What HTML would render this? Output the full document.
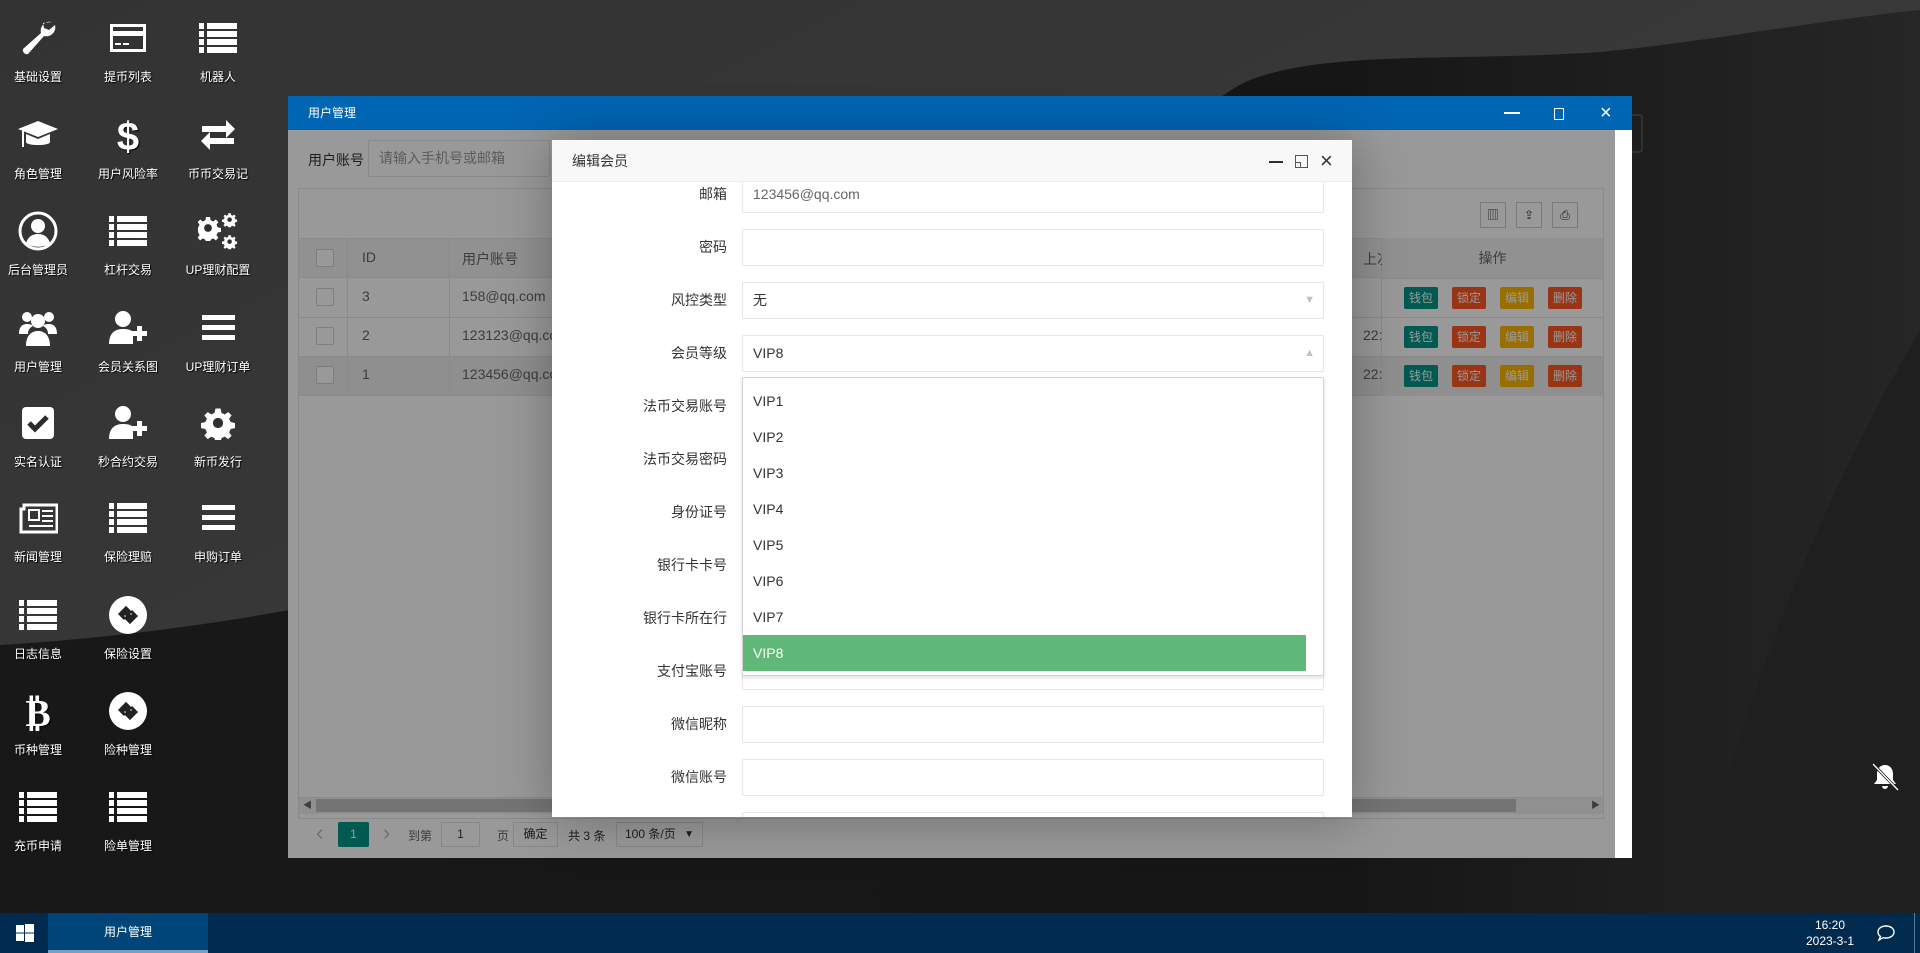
<!DOCTYPE html>
<html><head><meta charset="utf-8">
<style>
*{box-sizing:border-box;margin:0;padding:0}
body{width:1920px;height:953px;overflow:hidden;position:relative;background:#2e2e2e;font-family:"Liberation Sans","Noto Sans CJK SC",sans-serif;font-size:14px;color:#333}
.abs{position:absolute}
.ic{position:absolute;width:90px;text-align:center;color:#fff;font-size:12px;text-shadow:1px 1px 1px #000}
.ic svg{display:block;margin:0 auto 10px;width:40px;height:40px;fill:#fff}
.win{left:288px;top:96px;width:1344px;height:762px;background:#fff}
.tbar{left:0;top:0;width:1344px;height:34px;background:#0065b3;color:#fff;font-size:12px;line-height:34px;padding-left:20px}
.cb{display:inline-block;width:18px;height:18px;border:1px solid #d2d2d2;background:#fff;border-radius:2px}
.tc{position:absolute;font-size:14px;color:#666}
.btn{position:absolute;width:34px;height:22px;line-height:22px;text-align:center;color:#fff;font-size:12px;border-radius:2px}
.lbl{position:absolute;right:0;width:160px;text-align:right;font-size:14px;color:#333}
.inp{position:absolute;left:190px;width:582px;height:37px;border:1px solid #e6e6e6;border-radius:2px;background:#fff;font-size:14px;color:#666;line-height:35px;padding-left:10px}
.opt{height:36px;line-height:36px;padding-left:10px;font-size:14px;color:#333}
</style></head><body>
<svg width="0" height="0" style="position:absolute">
<defs>
<symbol id="list" viewBox="0 0 40 40"><rect x="1" y="5" width="5" height="6"/><rect x="9" y="5" width="30" height="6"/><rect x="1" y="13" width="5" height="6"/><rect x="9" y="13" width="30" height="6"/><rect x="1" y="21" width="5" height="6"/><rect x="9" y="21" width="30" height="6"/><rect x="1" y="29" width="5" height="6"/><rect x="9" y="29" width="30" height="6"/></symbol>
<symbol id="bars" viewBox="0 0 40 40"><rect x="4" y="7" width="33" height="5"/><rect x="4" y="17" width="33" height="5"/><rect x="4" y="27" width="33" height="5"/></symbol>
<symbol id="userplus" viewBox="0 0 40 40"><circle cx="15" cy="11" r="8"/><path d="M1 36c0-10 5-15 14-15 5 0 8 1 10 3v12z"/><rect x="24" y="23" width="15" height="5"/><rect x="29" y="18" width="5" height="15"/></symbol>
<symbol id="circ" viewBox="0 0 40 40"><circle cx="20" cy="20" r="19"/><path d="M11 20l7-7 4 4-3 3 3 3 4-4-3-3M29 20l-7 7-4-4 3-3-3-3-4 4 3 3" fill="none" stroke="#222" stroke-width="3"/></symbol>
<symbol id="gear" viewBox="0 0 40 40"><path d="M17 3h6l1 5 4 2 4-3 4 4-3 4 2 4 5 1v6l-5 1-2 4 3 4-4 4-4-3-4 2-1 5h-6l-1-5-4-2-4 3-4-4 3-4-2-4-5-1v-6l5-1 2-4-3-4 4-4 4 3 4-2z"/><circle cx="20" cy="20" r="6" fill="#2f2f2f"/></symbol>
</defs></svg>

<!-- desktop background -->
<svg class="abs" style="left:0;top:0" width="1920" height="953">
<defs>
<linearGradient id="g1" x1="0" y1="0" x2="1" y2="1"><stop offset="0" stop-color="#333"/><stop offset="1" stop-color="#3d3d3d"/></linearGradient>
<linearGradient id="g2" x1="0" y1="0" x2="1" y2="0"><stop offset="0" stop-color="#181818"/><stop offset=".7" stop-color="#161616"/><stop offset="1" stop-color="#262626"/></linearGradient>
</defs>
<rect width="1920" height="953" fill="url(#g1)"/>
<path d="M0 645C250 630 700 560 1000 320C1120 220 1180 110 1250 80C1330 50 1450 62 1600 52C1720 40 1820 20 1920 10L1920 953L0 953Z" fill="url(#g2)"/>
<path d="M1680 953C1740 700 1820 500 1920 330L1920 953Z" fill="#1f1f1f"/>
<rect x="1630" y="115" width="12" height="37" rx="2" fill="none" stroke="#444"/>
</svg>

<!-- desktop icons -->
<div class="ic" style="left:-7px;top:18px"><svg viewBox="0 0 40 40"><path d="M34 4a9 9 0 0 0-11 11L5 31a4 4 0 0 0 5 5l16-18a9 9 0 0 0 11-11l-6 5-5-2-1-5z"/></svg>基础设置</div>
<div class="ic" style="left:83px;top:18px"><svg viewBox="0 0 40 40"><path d="M2 6h36v28H2z M5 9v4h30V9z M5 18v13h30V18z" fill-rule="evenodd"/><rect x="7" y="25" width="6" height="2"/><rect x="15" y="25" width="6" height="2"/></svg>提币列表</div>
<div class="ic" style="left:173px;top:18px"><svg><use href="#list"/></svg>机器人</div>

<div class="ic" style="left:-7px;top:115px"><svg viewBox="0 0 40 40"><path d="M20 6L0 14l20 8 20-8z M8 19v8c0 4 24 4 24 0v-8l-12 5z M4 16v16h2V16z"/></svg>角色管理</div>
<div class="ic" style="left:83px;top:115px"><svg viewBox="0 0 40 40"><text x="20" y="35" text-anchor="middle" font-size="40" font-weight="bold" font-family="Liberation Sans" fill="#fff">$</text></svg>用户风险率</div>
<div class="ic" style="left:173px;top:115px"><svg viewBox="0 0 40 40"><path d="M4 11h24V5l9 9-9 9v-6H4z M36 23H12v-6l-9 9 9 9v-6h24z"/></svg>币币交易记</div>

<div class="ic" style="left:-7px;top:211px"><svg viewBox="0 0 40 40"><circle cx="20" cy="20" r="18" fill="none" stroke="#fff" stroke-width="3"/><circle cx="20" cy="15" r="7"/><path d="M8 32c2-6 6-9 12-9s10 3 12 9c-6 5-18 5-24 0z"/></svg>后台管理员</div>
<div class="ic" style="left:83px;top:211px"><svg><use href="#list"/></svg>杠杆交易</div>
<div class="ic" style="left:173px;top:211px"><svg viewBox="0 0 40 40"><g transform="translate(-3 4) scale(.65)"><use href="#gear"/></g><g transform="translate(24 1) scale(.38)"><use href="#gear"/></g><g transform="translate(24 23) scale(.38)"><use href="#gear"/></g></svg>UP理财配置</div>

<div class="ic" style="left:-7px;top:308px"><svg viewBox="0 0 40 40"><circle cx="9" cy="9" r="5"/><circle cx="31" cy="9" r="5"/><circle cx="20" cy="13" r="7"/><path d="M1 26c0-8 4-10 8-10s5 1 6 2c-4 2-5 5-5 8z M39 26c0-8-4-10-8-10s-5 1-6 2c4 2 5 5 5 8z M8 38c0-10 5-15 12-15s12 5 12 15z"/></svg>用户管理</div>
<div class="ic" style="left:83px;top:308px"><svg><use href="#userplus"/></svg>会员关系图</div>
<div class="ic" style="left:173px;top:308px"><svg><use href="#bars"/></svg>UP理财订单</div>

<div class="ic" style="left:-7px;top:403px"><svg viewBox="0 0 40 40"><rect x="4" y="4" width="32" height="32" rx="4"/><path d="M11 20l6 6 12-12" fill="none" stroke="#2c2c2c" stroke-width="5"/></svg>实名认证</div>
<div class="ic" style="left:83px;top:403px"><svg><use href="#userplus"/></svg>秒合约交易</div>
<div class="ic" style="left:173px;top:403px"><svg viewBox="0 0 40 40"><g transform="translate(3 3) scale(.85)"><use href="#gear"/></g></svg>新币发行</div>

<div class="ic" style="left:-7px;top:498px"><svg viewBox="0 0 40 40"><path d="M6 7h33v27H3V11h3z" fill="none" stroke="#fff" stroke-width="3"/><rect x="11" y="12" width="10" height="10" fill="none" stroke="#fff" stroke-width="2"/><rect x="24" y="12" width="11" height="2"/><rect x="24" y="17" width="11" height="2"/><rect x="24" y="22" width="11" height="2"/><rect x="11" y="27" width="24" height="2"/></svg>新闻管理</div>
<div class="ic" style="left:83px;top:498px"><svg><use href="#list"/></svg>保险理赔</div>
<div class="ic" style="left:173px;top:498px"><svg><use href="#bars"/></svg>申购订单</div>

<div class="ic" style="left:-7px;top:595px"><svg><use href="#list"/></svg>日志信息</div>
<div class="ic" style="left:83px;top:595px"><svg><use href="#circ"/></svg>保险设置</div>

<div class="ic" style="left:-7px;top:691px"><svg viewBox="0 0 40 40"><text x="20" y="35" text-anchor="middle" font-size="38" font-weight="bold" font-family="DejaVu Sans" fill="#fff">₿</text></svg>币种管理</div>
<div class="ic" style="left:83px;top:691px"><svg><use href="#circ"/></svg>险种管理</div>

<div class="ic" style="left:-7px;top:787px"><svg><use href="#list"/></svg>充币申请</div>
<div class="ic" style="left:83px;top:787px"><svg><use href="#list"/></svg>险单管理</div>

<!-- window -->
<div class="abs win">
 <div class="abs tbar">用户管理
  <div class="abs" style="left:1216px;top:16px;width:16px;height:2px;background:#fff"></div>
  <div class="abs" style="left:1266px;top:12px;width:10px;height:12px;border:1px solid #fff"></div>
  <div class="abs" style="left:1312px;top:0;font-size:20px;line-height:34px">×</div>
 </div>
 <!-- content -->
 <div class="abs" style="left:0;top:34px;width:1327px;height:728px;background:#fff;overflow:hidden">
  <div class="abs" style="left:20px;top:20px;font-size:14px;color:#333">用户账号</div>
  <div class="abs" style="left:80px;top:10px;width:182px;height:37px;border:1px solid #e6e6e6;border-radius:2px;color:#999;padding-left:10px;line-height:35px;font-size:14px">请输入手机号或邮箱</div>
  <div class="abs" style="left:10px;top:58px;width:1306px;height:631px;border:1px solid #e6e6e6">
   <div class="abs" style="left:1181px;top:13px;width:26px;height:26px;border:1px solid #ccc;font-size:12px;text-align:center;line-height:24px;color:#333">▥</div>
   <div class="abs" style="left:1217px;top:13px;width:26px;height:26px;border:1px solid #ccc;font-size:12px;text-align:center;line-height:24px;color:#333">⇪</div>
   <div class="abs" style="left:1253px;top:13px;width:26px;height:26px;border:1px solid #ccc;font-size:12px;text-align:center;line-height:24px;color:#333">⎙</div>
   <div class="abs" style="left:0;top:49px;width:1304px;height:40px;background:#f2f2f2;border-top:1px solid #e6e6e6;border-bottom:1px solid #e6e6e6"></div>
   <div class="abs" style="left:0;top:167px;width:1304px;height:39px;background:#eee"></div>
   <div class="abs" style="left:0;top:128px;width:1304px;height:1px;background:#e6e6e6"></div>
   <div class="abs" style="left:0;top:167px;width:1304px;height:1px;background:#e6e6e6"></div>
   <div class="abs" style="left:0;top:206px;width:1304px;height:1px;background:#e6e6e6"></div>
   <div class="abs" style="left:48px;top:49px;width:1px;height:158px;background:#e6e6e6"></div>
   <div class="abs" style="left:150px;top:49px;width:1px;height:158px;background:#e6e6e6"></div>
   <div class="abs" style="left:1082px;top:49px;width:1px;height:158px;background:#e6e6e6"></div>
   <div class="abs" style="left:17px;top:60px"><span class="cb"></span></div>
   <div class="abs" style="left:17px;top:99px"><span class="cb"></span></div>
   <div class="abs" style="left:17px;top:138px"><span class="cb"></span></div>
   <div class="abs" style="left:17px;top:177px"><span class="cb"></span></div>
   <div class="tc" style="left:63px;top:60px">ID</div>
   <div class="tc" style="left:163px;top:60px">用户账号</div>
   <div class="tc" style="left:1064px;top:60px">上次</div>
   <div class="tc" style="left:63px;top:99px">3</div><div class="tc" style="left:163px;top:99px">158@qq.com</div>
   <div class="tc" style="left:63px;top:138px">2</div><div class="tc" style="left:163px;top:138px">123123@qq.com</div><div class="tc" style="left:1064px;top:138px">22:</div>
   <div class="tc" style="left:63px;top:177px">1</div><div class="tc" style="left:163px;top:177px">123456@qq.com</div><div class="tc" style="left:1064px;top:177px">22:</div>
   <div class="abs" style="left:1083px;top:49px;width:221px;height:158px;background:#fff">
    <div class="abs" style="left:0;top:0;width:221px;height:40px;background:#f2f2f2;text-align:center;line-height:40px;color:#666">操作</div>
    <div class="abs" style="left:0;top:40px;width:221px;height:1px;background:#e6e6e6"></div>
    <div class="abs" style="left:0;top:118px;width:221px;height:40px;background:#eee"></div>
    <div class="abs" style="left:0;top:79px;width:221px;height:1px;background:#e6e6e6"></div>
    <div class="abs" style="left:0;top:118px;width:221px;height:1px;background:#e6e6e6"></div>
    <div class="btn" style="left:22px;top:49px;background:#009688">钱包</div><div class="btn" style="left:70px;top:49px;background:#ff5722">锁定</div><div class="btn" style="left:118px;top:49px;background:#ffb800">编辑</div><div class="btn" style="left:166px;top:49px;background:#ff5722">删除</div>
    <div class="btn" style="left:22px;top:88px;background:#009688">钱包</div><div class="btn" style="left:70px;top:88px;background:#ff5722">锁定</div><div class="btn" style="left:118px;top:88px;background:#ffb800">编辑</div><div class="btn" style="left:166px;top:88px;background:#ff5722">删除</div>
    <div class="btn" style="left:22px;top:127px;background:#009688">钱包</div><div class="btn" style="left:70px;top:127px;background:#ff5722">锁定</div><div class="btn" style="left:118px;top:127px;background:#ffb800">编辑</div><div class="btn" style="left:166px;top:127px;background:#ff5722">删除</div>
   </div>
   <!-- scrollbar -->
   <div class="abs" style="left:0;top:608px;width:1304px;height:17px;background:#f0f0f0;border-top:1px solid #e6e6e6"></div>
   <div class="abs" style="left:17px;top:610px;width:1200px;height:13px;background:#c1c1c1"></div>
   <div class="abs" style="left:4px;top:608px;font-size:9px;color:#666;line-height:17px">◀</div>
   <div class="abs" style="left:1292px;top:608px;font-size:9px;color:#666;line-height:17px">▶</div>
  </div>
  <!-- pagination -->
  <div class="abs" style="left:0;top:680px;width:1327px;height:50px;font-size:12px;color:#333">
   <div class="abs" style="left:28px;top:10px;color:#bbb;font-size:22px;line-height:25px">‹</div>
   <div class="abs" style="left:50px;top:12px;width:31px;height:25px;background:#009688;color:#fff;text-align:center;line-height:25px;border-radius:2px">1</div>
   <div class="abs" style="left:95px;top:10px;color:#bbb;font-size:22px;line-height:25px">›</div>
   <div class="abs" style="left:120px;top:17px;color:#666">到第</div>
   <div class="abs" style="left:153px;top:12px;width:39px;height:25px;border:1px solid #e2e2e2;text-align:center;line-height:23px">1</div>
   <div class="abs" style="left:209px;top:17px;color:#666">页</div>
   <div class="abs" style="left:225px;top:12px;width:45px;height:25px;border:1px solid #e2e2e2;text-align:center;line-height:23px">确定</div>
   <div class="abs" style="left:280px;top:17px">共 3 条</div>
   <div class="abs" style="left:328px;top:12px;width:87px;height:25px;border:1px solid #e2e2e2;line-height:23px;padding-left:8px">100 条/页<span style="position:absolute;right:8px;font-size:10px">▼</span></div>
  </div>
  <!-- shade -->
  <div class="abs" style="left:0;top:0;width:1327px;height:728px;background:rgba(0,0,0,0.4)"></div>
 </div>
</div>

<!-- modal -->
<div class="abs" style="left:552px;top:140px;width:800px;height:677px;background:#fff;box-shadow:1px 1px 50px rgba(0,0,0,.3);overflow:hidden">
 <div class="abs" style="left:0;top:0;width:800px;height:42px;background:#f8f8f8;border-bottom:1px solid #eee;z-index:3;font-size:14px;line-height:42px;padding-left:20px;color:#333">编辑会员
  <div class="abs" style="left:717px;top:21px;width:14px;height:2px;background:#2e2d3c"></div>
  <div class="abs" style="left:743px;top:15px;width:13px;height:13px;border:1px solid #555"></div>
  <div class="abs" style="left:743px;top:22px;width:6px;height:6px;border:1px solid #555"></div>
  <div class="abs" style="left:768px;top:0;font-size:22px;color:#333">×</div>
 </div>
 <div class="abs" style="left:0;top:36px;width:800px;height:700px">
  <div class="lbl" style="left:15px;top:8px">邮箱</div><div class="inp" style="top:0">123456@qq.com</div>
  <div class="lbl" style="left:15px;top:61px">密码</div><div class="inp" style="top:53px"></div>
  <div class="lbl" style="left:15px;top:114px">风控类型</div><div class="inp" style="top:106px;color:#333">无<span style="position:absolute;right:8px;top:0;color:#c2c2c2;font-size:11px">▼</span></div>
  <div class="lbl" style="left:15px;top:167px">会员等级</div><div class="inp" style="top:159px;color:#333">VIP8<span style="position:absolute;right:8px;top:0;color:#c2c2c2;font-size:11px">▲</span></div>
  <div class="lbl" style="left:15px;top:220px">法币交易账号</div><div class="inp" style="top:212px"></div>
  <div class="lbl" style="left:15px;top:273px">法币交易密码</div><div class="inp" style="top:265px"></div>
  <div class="lbl" style="left:15px;top:326px">身份证号</div><div class="inp" style="top:318px"></div>
  <div class="lbl" style="left:15px;top:379px">银行卡卡号</div><div class="inp" style="top:371px"></div>
  <div class="lbl" style="left:15px;top:432px">银行卡所在行</div><div class="inp" style="top:424px"></div>
  <div class="lbl" style="left:15px;top:485px">支付宝账号</div><div class="inp" style="top:477px"></div>
  <div class="lbl" style="left:15px;top:538px">微信昵称</div><div class="inp" style="top:530px"></div>
  <div class="lbl" style="left:15px;top:591px">微信账号</div><div class="inp" style="top:583px"></div>
  <div class="inp" style="top:636px"></div>
  <!-- dropdown -->
  <div class="abs" style="left:190px;top:201px;width:582px;height:299px;background:#fff;border:1px solid #d2d2d2;border-radius:2px;box-shadow:0 2px 4px rgba(0,0,0,.12);padding-top:5px;z-index:2">
   <div class="opt">VIP1</div><div class="opt">VIP2</div><div class="opt">VIP3</div><div class="opt">VIP4</div><div class="opt">VIP5</div><div class="opt">VIP6</div><div class="opt">VIP7</div>
   <div class="opt" style="background:#5fb878;color:#fff;width:563px">VIP8</div>
  </div>
 </div>
</div>

<!-- bell -->
<svg class="abs" style="left:1870px;top:762px" width="30" height="30" viewBox="0 0 30 30"><path d="M15 3c-5 0-8 4-8 9v6l-3 4h22l-3-4v-6c0-5-3-9-8-9z M12 24a3 3 0 0 0 6 0z" fill="#fff"/><path d="M3 2l25 26" stroke="#1c1c1c" stroke-width="3"/><path d="M3 2l25 26" stroke="#fff" stroke-width="1.3"/></svg>

<!-- taskbar -->
<div class="abs" style="left:0;top:913px;width:1920px;height:40px;background:#002b4f">
 <svg class="abs" style="left:16px;top:11px" width="18" height="18" viewBox="0 0 18 18" fill="#fff"><rect x="0" y="1" width="8" height="7.5"/><rect x="9" y="0" width="9" height="8.5"/><rect x="0" y="9.5" width="8" height="7.5"/><rect x="9" y="9.5" width="9" height="8.5"/></svg>
 <div class="abs" style="left:48px;top:0;width:160px;height:40px;background:#00457a;border-bottom:3px solid #7aa0c0;color:#fff;font-size:12px;text-align:center;line-height:38px">用户管理</div>
 <div class="abs" style="left:1800px;top:4px;width:60px;text-align:center;color:#fff;font-size:12px;line-height:16px">16:20<br>2023-3-1</div>
 <svg class="abs" style="left:1877px;top:11px" width="18" height="18" viewBox="0 0 18 18"><path d="M9 2c4.5 0 8 2.5 8 6s-3.5 6-8 6c-1 0-2 0-3-.3L2 16l1.5-3.5C2 11.5 1 10 1 8c0-3.5 3.5-6 8-6z" fill="none" stroke="#fff" stroke-width="1.4"/></svg>
 <div class="abs" style="left:1914px;top:0;width:1px;height:40px;background:#5a7a98"></div>
</div>
</body></html>
